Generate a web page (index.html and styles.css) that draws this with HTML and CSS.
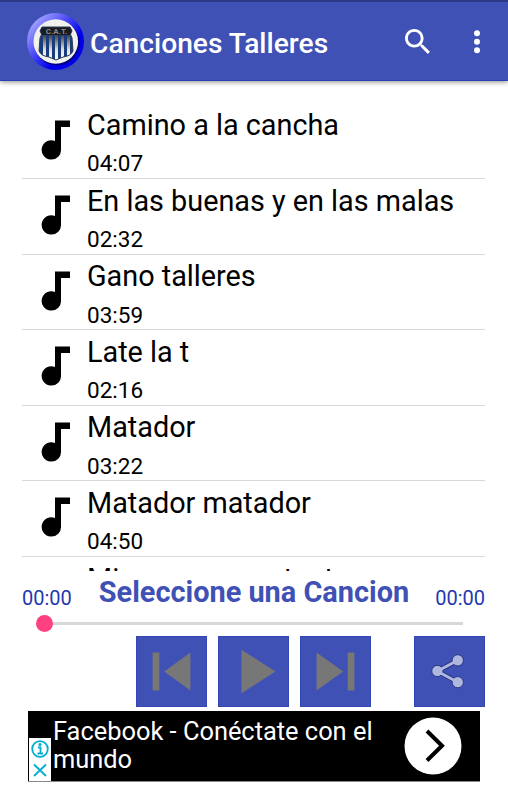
FILE: index.html
```html
<!DOCTYPE html>
<html lang="es">
<head>
    <meta charset="UTF-8">
    <meta name="viewport" content="width=device-width, initial-scale=1.0">
    <title>Canciones Talleres</title>
    <link rel="stylesheet" href="styles.css">
</head>
<body>
    <svg class="defs" width="0" height="0">
        <symbol id="note" viewBox="0 0 30 40">
            <path d="M14 0.5H29V7H20V29A9.7 9.7 0 1 1 14 20.9Z"/>
        </symbol>
    </svg>

    <!-- Toolbar -->
    <header class="toolbar">
        <svg class="logo" viewBox="0 0 57 57">
            <defs>
                <linearGradient id="ring" x1="0.1" y1="0.15" x2="0.85" y2="0.85">
                    <stop offset="0" stop-color="#a3a3ff"/>
                    <stop offset="0.5" stop-color="#3434f4"/>
                    <stop offset="0.75" stop-color="#0000e8"/>
                </linearGradient>
                <linearGradient id="stripe" x1="0" y1="0" x2="0" y2="1">
                    <stop offset="0" stop-color="#333"/>
                    <stop offset="0.6" stop-color="#e0e0e0"/>
                    <stop offset="1" stop-color="#fff"/>
                </linearGradient>
                <clipPath id="shield">
                    <path d="M15 14H43L45 18Q42 21 45 25L46 38Q44 43 36 44L29 47L22 44Q14 43 12 38L13 25Q16 21 13 18Z"/>
                </clipPath>
            </defs>
            <circle cx="28.5" cy="28.5" r="28.5" fill="url(#ring)"/>
            <circle cx="30" cy="30" r="22.5" fill="#000080"/>
            <circle cx="28.8" cy="28.5" r="22.3" fill="#f1f1ec"/>
            <g clip-path="url(#shield)">
                <rect x="11" y="13" width="36" height="35" fill="#183c7c"/>
                <path d="M16 21h3v24h-3zM22 21h3v24h-3zM28 21h3v26h-3zM34 21h3v24h-3zM40 21h3v24h-3z" fill="url(#stripe)"/>
                <rect x="11" y="13" width="36" height="9" fill="#171b24"/>
            </g>
            <path d="M15 14H43L45 18Q42 21 45 25L46 38Q44 43 36 44L29 47L22 44Q14 43 12 38L13 25Q16 21 13 18Z" fill="none" stroke="#2c3a56"/>
            <text x="29.5" y="21" class="logo-text">C.A.T.</text>
        </svg>
        <h1>Canciones Talleres</h1>
        <svg class="search" viewBox="3 3 17.5 17.5">
            <path d="M15.5 14h-.79l-.28-.27C15.41 12.59 16 11.11 16 9.5 16 5.91 13.09 3 9.5 3S3 5.91 3 9.5 5.91 16 9.5 16c1.61 0 3.09-.59 4.23-1.57l.27.28v.79l5 4.99L20.49 19l-4.99-5zm-6 0C7.01 14 5 11.99 5 9.5S7.01 5 9.5 5 14 7.01 14 9.5 11.99 14 9.5 14z"/>
        </svg>
        <svg class="more" viewBox="0 0 6 24">
            <circle cx="3" cy="3.2" r="3"/><circle cx="3" cy="11.8" r="3"/><circle cx="3" cy="20.3" r="3"/>
        </svg>
    </header>

    <!-- Song list -->
    <ul class="songs">
        <li><svg class="note"><use href="#note"/></svg><div><h2>Camino a la cancha</h2><p>04:07</p></div></li>
        <li><svg class="note"><use href="#note"/></svg><div><h2>En las buenas y en las malas</h2><p>02:32</p></div></li>
        <li><svg class="note"><use href="#note"/></svg><div><h2>Gano talleres</h2><p>03:59</p></div></li>
        <li><svg class="note"><use href="#note"/></svg><div><h2>Late la t</h2><p>02:16</p></div></li>
        <li><svg class="note"><use href="#note"/></svg><div><h2>Matador</h2><p>03:22</p></div></li>
        <li><svg class="note"><use href="#note"/></svg><div><h2>Matador matador</h2><p>04:50</p></div></li>
        <li><svg class="note"><use href="#note"/></svg><div><h2>Mi corazon contento</h2></div></li>
    </ul>

    <!-- Player -->
    <div class="now-playing">
        <span class="time">00:00</span>
        <strong>Seleccione una Cancion</strong>
        <span class="time">00:00</span>
    </div>
    <div class="seekbar"><span class="thumb"></span><span class="track"></span></div>
    <div class="controls">
        <button><svg viewBox="0 0 71 71"><path d="M16 16h7v39h-7zM55 16v39L28 35.5z"/></svg></button>
        <button><svg viewBox="0 0 71 71"><path d="M23 13v45L58 35.5z"/></svg></button>
        <button><svg viewBox="0 0 71 71"><path d="M48 16h7v39h-7zM16 16v39L43.5 35.5z"/></svg></button>
        <button class="share">
            <svg viewBox="0 0 71 71">
                <path class="share-edge" d="M44 24L23 35.3L44 46.5"/>
                <g class="share-dots"><circle cx="44" cy="24" r="5.8"/><circle cx="23" cy="35" r="5.8"/><circle cx="44" cy="46.5" r="5.8"/></g>
                <path class="share-line" d="M44 24L23 35.3L44 46.5"/>
            </svg>
        </button>
    </div>

    <!-- Ad banner -->
    <div class="ad">
        <svg class="ad-choices" viewBox="0 0 22 43">
            <rect width="22" height="43" fill="#fff" stroke="none"/>
            <circle cx="11" cy="11" r="7.8"/>
            <path d="M9 9.5h2.5v6M8.5 15.5h5.5M5 26.5l12 11.5M17 26.5L5 38"/>
            <circle cx="11" cy="6.6" r="0.7"/>
        </svg>
        <p>Facebook - Conéctate con el mundo</p>
        <svg class="ad-arrow" viewBox="0 0 58 58">
            <circle cx="29" cy="29" r="28.5" fill="#fff" stroke="none"/>
            <path d="M23 14L38 28.7L23 43.5"/>
        </svg>
    </div>
</body>
</html>
```
FILE: styles.css
```css
* {
    box-sizing: border-box;
    margin: 0;
    padding: 0;
}
body {
    background-color: #fff;
    color: #000;
    font-family: Roboto, sans-serif;
    height: 800px;
    overflow: hidden;
}
svg {
    flex-shrink: 0;
}
.defs {
    display: block;
}
/* Toolbar */
.toolbar {
    display: flex;
    align-items: center;
    height: 81px;
    padding: 4px 28px 0 27px;
    background-color: #3f51b5;
    border-top: 2px solid #2c3a87;
    border-bottom: 1px solid #2a41b0;
    box-shadow: 0 1px 5px rgba(0, 0, 0, 0.45);
    color: #fff;
    fill: #fff;
}
.logo {
    width: 57px;
    height: 57px;
    margin-top: -3px;
}
.logo-text {
    font-size: 8px;
    font-weight: bold;
    text-anchor: middle;
    fill: #8b8b8b;
}
.toolbar h1 {
    flex: 1;
    margin-left: 6px;
    font-size: 28.2px;
    font-weight: 500;
    line-height: 33px;
}
.search {
    width: 25px;
    height: 25px;
    margin: -4px 44px 0 0;
}
.more {
    width: 6px;
    height: 24px;
    margin-top: -2px;
}
/* Song list */
.songs {
    height: 490px;
    padding: 22.5px 23px 0 22px;
    overflow: hidden;
    list-style: none;
}
.songs li {
    display: flex;
    height: 75.6px;
    border-bottom: 1px solid #d8d8d8;
}
.note {
    width: 30px;
    height: 40px;
    margin: 16px 16.5px 0 18.5px;
}
.songs h2 {
    font-size: 28.8px;
    font-weight: 400;
    line-height: 34px;
    margin-top: 4.6px;
}
.songs p {
    font-size: 22.5px;
    line-height: 26px;
    margin-top: 8.4px;
}
/* Player */
.now-playing {
    display: flex;
    justify-content: space-between;
    height: 42px;
    padding: 0 23px 0 22px;
    color: #3f51b5;
}
.now-playing strong {
    margin: 4px 0 0 1px;
    font-size: 28.9px;
    line-height: 34px;
}
.time {
    margin-top: 15px;
    font-size: 20px;
    line-height: 24px;
    color: #1f38ae;
}
.seekbar {
    display: flex;
    align-items: center;
    height: 21px;
    padding: 0 45px 0 36px;
}
.thumb {
    width: 17px;
    height: 17px;
    border-radius: 50%;
    background-color: #ff4081;
}
.track {
    flex: 1;
    height: 3px;
    background-color: #d8d8d8;
}
.controls {
    display: flex;
    gap: 11px;
    margin-top: 2px;
    padding: 0 22.6px 0 136.3px;
}
.controls button {
    width: 71px;
    height: 71px;
    border: 1px solid #3047b5;
    background-color: #3f51b5;
}
.controls svg {
    display: block;
    width: 69px;
    height: 69px;
    fill: #777;
}
.controls .share {
    margin-left: auto;
}
.share-edge {
    fill: none;
    stroke: #26347f;
    stroke-width: 5;
}
.share-dots {
    fill: #afb7df;
    stroke: #26347f;
}
.share-line {
    fill: none;
    stroke: #afb7df;
    stroke-width: 3;
}
/* Ad banner */
.ad {
    display: flex;
    width: 452px;
    height: 71px;
    margin: 4px 0 0 28px;
    background-color: #000;
    border-bottom: 1px solid #888;
    color: #fff;
}
.ad-choices {
    width: 22px;
    height: 43px;
    margin: 27px 2px 0 1px;
    fill: none;
    stroke: #00aecd;
    stroke-width: 1.8;
}
.ad p {
    flex: 1;
    margin-top: 6px;
    font-size: 25.4px;
    line-height: 28px;
}
.ad-arrow {
    width: 58px;
    height: 58px;
    margin: 6px 18px 0 0;
    fill: none;
    stroke: #000;
    stroke-width: 4;
}
```
